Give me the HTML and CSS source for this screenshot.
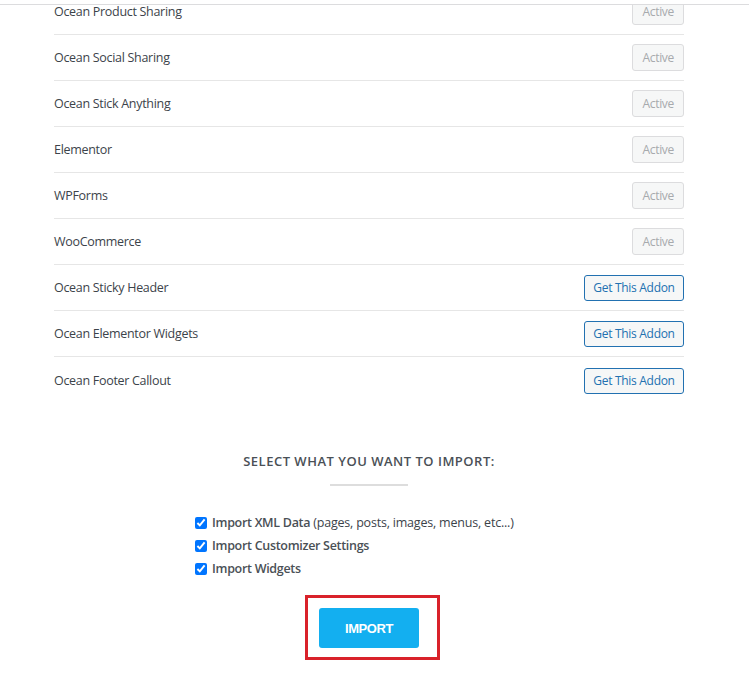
FILE: index.html
```html
<!DOCTYPE html>
<html lang="en">
<head>
    <meta charset="UTF-8">
    <meta name="viewport" content="width=device-width, initial-scale=1.0">
    <title>Demo Import</title>
    <link rel="stylesheet" href="styles.css">
</head>
<body>

    <div class="topbar"></div>

    <div class="viewport">
        <!-- Required plugins list -->
        <ul class="plugins">
            <li class="plugin"><span>Ocean Product Sharing</span><button class="btn-active" disabled>Active</button></li>
            <li class="plugin"><span>Ocean Social Sharing</span><button class="btn-active" disabled>Active</button></li>
            <li class="plugin"><span>Ocean Stick Anything</span><button class="btn-active" disabled>Active</button></li>
            <li class="plugin"><span>Elementor</span><button class="btn-active" disabled>Active</button></li>
            <li class="plugin"><span>WPForms</span><button class="btn-active" disabled>Active</button></li>
            <li class="plugin"><span>WooCommerce</span><button class="btn-active" disabled>Active</button></li>
            <li class="plugin"><span>Ocean Sticky Header</span><button class="btn-addon">Get This Addon</button></li>
            <li class="plugin"><span>Ocean Elementor Widgets</span><button class="btn-addon">Get This Addon</button></li>
            <li class="plugin"><span>Ocean Footer Callout</span><button class="btn-addon">Get This Addon</button></li>
        </ul>

        <!-- Import options -->
        <h3 class="import-title">Select what you want to import:</h3>
        <div class="title-line"></div>

        <form class="import-form">
            <label class="option"><input type="checkbox" checked> <strong>Import XML Data</strong> (pages, posts, images, menus, etc...)</label>
            <label class="option"><input type="checkbox" checked> <strong>Import Customizer Settings</strong></label>
            <label class="option"><input type="checkbox" checked> <strong>Import Widgets</strong></label>

            <div class="highlight">
                <button type="button" class="btn-import">Import</button>
            </div>
        </form>
    </div>

</body>
</html>
```

FILE: styles.css
```css
body {
    margin: 0;
    background: #fff;
    font-family: "Open Sans", Arial, sans-serif;
    color: #3c434a;
    overflow: hidden;
}
.topbar {
    height: 4px;
    border-bottom: 1px solid #dcdcde;
}
.viewport {
    height: 674px;
    overflow: hidden;
    padding-left: 54px;
}
.plugins {
    list-style: none;
    margin: -16px 0 0 0;
    padding: 0;
    width: 630px;
}
.plugin {
    display: flex;
    align-items: center;
    justify-content: space-between;
    height: 45px;
    border-bottom: 1px solid #e6e6e6;
    font-size: 12.5px;
    letter-spacing: -0.3px;
}
.plugin:last-child {
    border-bottom: none;
    height: 47px;
}
.btn-active,
.btn-addon {
    font-family: "Open Sans", Arial, sans-serif;
    font-size: 12px;
    letter-spacing: -0.3px;
    border-radius: 3px;
    background: #f6f7f7;
    white-space: nowrap;
}
.btn-active {
    height: 27px;
    padding: 0 9px;
    color: #a7aaad;
    border: 1px solid #dcdcde;
}
.btn-addon {
    height: 26px;
    width: 100px;
    padding: 0;
    color: #2271b1;
    border: 1px solid #2271b1;
}
.import-title {
    margin: 48px 0 0 0;
    width: 630px;
    text-align: center;
    text-transform: uppercase;
    font-size: 13px;
    font-weight: 600;
    letter-spacing: 0.5px;
    color: #4a5056;
}
.title-line {
    width: 78px;
    height: 2px;
    background: #dddddd;
    margin: 14px 0 0 276px;
}
.import-form {
    margin: 25px 0 0 141px;
}
.option {
    display: flex;
    align-items: center;
    height: 23px;
    font-size: 12.5px;
    letter-spacing: -0.2px;
    color: #3c434a;
    white-space: pre;
}
.option input {
    width: 12px;
    height: 12px;
    margin: 0 5px 0 0;
    accent-color: #0075ff;
}
.option strong {
    font-weight: 600;
    color: #4a5056;
    letter-spacing: -0.3px;
}
.highlight {
    display: inline-block;
    margin: 15px 0 0 110px;
    padding: 10px 18px 9px 11px;
    border: 3px solid #d9222a;
}
.btn-import {
    display: block;
    width: 100px;
    height: 40px;
    border: none;
    border-radius: 3px;
    background: #13aff0;
    color: #fff;
    font-family: Arial, "Liberation Sans", sans-serif;
    font-weight: bold;
    font-size: 13px;
    letter-spacing: -0.4px;
    text-transform: uppercase;
}
```
